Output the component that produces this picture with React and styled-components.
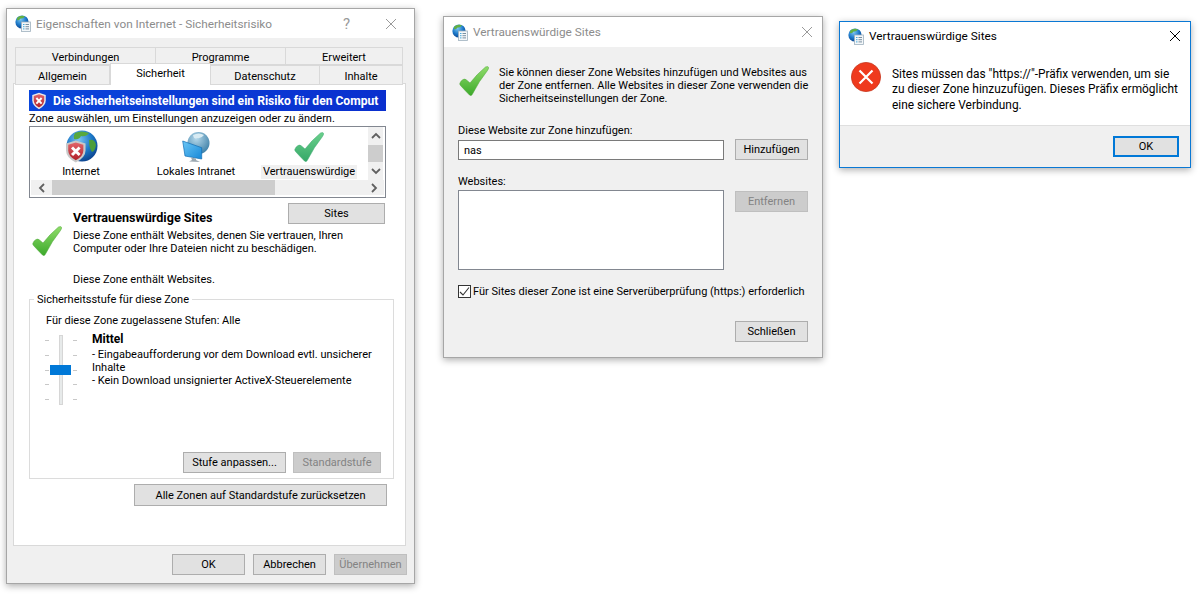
import React from "react";
import styled, { createGlobalStyle } from "styled-components";

const GlobalStyle = createGlobalStyle`
  html, body {
    margin: 0;
    background: #fff;
    font-family: "Roboto", "Liberation Sans", sans-serif;
    font-size: 11px;
    color: #000;
  }
`;

function Defs() {
  return (
    <svg width="0" height="0" style={{ position: "absolute" }}>
      <defs>
        <radialGradient id="globeFill" cx="40%" cy="30%" r="75%">
          <stop offset="0" stopColor="#7cc4f2" />
          <stop offset="0.55" stopColor="#1d79c8" />
          <stop offset="1" stopColor="#0b3f8a" />
        </radialGradient>
        <radialGradient id="paleGlobe" cx="40%" cy="30%" r="75%">
          <stop offset="0" stopColor="#b5d8ea" />
          <stop offset="1" stopColor="#3b7ea6" />
        </radialGradient>
        <linearGradient id="shieldFill" x1="0" y1="0" x2="0" y2="1">
          <stop offset="0" stopColor="#e2646a" />
          <stop offset="1" stopColor="#b01f28" />
        </linearGradient>
        <linearGradient id="limeCheck" x1="0" y1="0" x2="0" y2="1">
          <stop offset="0" stopColor="#8fdc6a" />
          <stop offset="1" stopColor="#3ca92b" />
        </linearGradient>
        <linearGradient id="tealCheck" x1="0" y1="0" x2="0" y2="1">
          <stop offset="0" stopColor="#6bd08c" />
          <stop offset="1" stopColor="#35a868" />
        </linearGradient>
        <linearGradient id="screenFill" x1="0" y1="0" x2="1" y2="1">
          <stop offset="0" stopColor="#6cc7f5" />
          <stop offset="1" stopColor="#1788d8" />
        </linearGradient>
      </defs>
    </svg>
  );
}

function CheckIcon({ teal }) {
  return (
    <svg width="30" height="30" viewBox="0 0 30 30">
      <path
        d="M0.8 17.5 Q1.5 15 4 13.5 Q6 12.5 7.5 14 L11 17 Q18 8 26.5 1 Q29 0 29.7 1.5 Q29.5 3 28.5 4.5 Q20 15 13.5 28 Q12.5 30.5 10.5 29 Q6 24.5 1.5 19.5 Q0.6 18.5 0.8 17.5 Z"
        fill={teal ? "url(#tealCheck)" : "url(#limeCheck)"}
        stroke={teal ? "#3aa96e" : "#4aa534"}
        strokeWidth="0.5"
      />
    </svg>
  );
}

function ShieldShape({ small }) {
  return (
    <>
      <path d="M10 1 L19 4 V11 Q19 18 10 23 Q1 18 1 11 V4 Z" fill={small ? "#e9e9e9" : "#c9c9c9"} />
      <path d="M10 3 L17 5.3 V11 Q17 16.8 10 20.8 Q3 16.8 3 11 V5.3 Z" fill="url(#shieldFill)" />
      <path d="M6.5 8 L13.5 15.5 M13.5 8 L6.5 15.5" stroke="#fff" strokeWidth="2.6" />
    </>
  );
}

function GlobeShieldIcon() {
  return (
    <svg width="34" height="34" viewBox="0 0 34 34">
      <circle cx="18" cy="16" r="15.5" fill="url(#globeFill)" />
      <path d="M11 3 Q17 0 25 3 Q22 7 17 6 Q15 10 10 9 Q9 6 11 3 Z" fill="#58a83e" />
      <path d="M25 10 Q31 9 32 15 Q31 21 28 22 Q25 18 25 10 Z" fill="#4d9e3a" />
      <g transform="translate(1 9.5) scale(1.08 1)">
        <ShieldShape />
      </g>
    </svg>
  );
}

function IntranetIcon() {
  return (
    <svg width="30" height="30" viewBox="0 0 30 30">
      <circle cx="17.5" cy="11" r="11" fill="url(#paleGlobe)" />
      <path d="M12 3 Q18 0 23 3 Q20 7 16 6 Q13 8 12 3 Z" fill="#d8ebf3" />
      <path d="M1.7 9 L20.7 15.7 V27 L4 24 Z" fill="url(#screenFill)" stroke="#0f6db5" strokeWidth="0.7" />
      <path d="M10 25.5 L15 26.5 L15 28 L19 30 L8 29.5 L11 28 Z" fill="#9aa7b0" />
    </svg>
  );
}

function WindowIcon() {
  return (
    <svg width="16" height="17" viewBox="0 0 16 17">
      <circle cx="7" cy="7" r="6.6" fill="url(#globeFill)" />
      <path d="M3 2 Q7 0 10 1.5 Q8 4 5.5 3.5 Q4 6 2 5 Q1.6 3 3 2 Z" fill="#62b043" />
      <rect x="6.5" y="7" width="9" height="9.5" fill="#f4f7f9" stroke="#9fb0bd" strokeWidth="0.8" />
      <path d="M10.5 9.5 H14 M10.5 11.7 H14 M10.5 13.9 H14" stroke="#6d8596" strokeWidth="0.9" />
      <path d="M8 9.5 H9.5 M8 11.7 H9.5 M8 13.9 H9.5" stroke="#2f9fd8" strokeWidth="0.9" />
    </svg>
  );
}

function CloseIcon({ color }) {
  return (
    <svg width="12" height="12" viewBox="0 0 12 12">
      <path d="M1 1 L11 11 M11 1 L1 11" stroke={color} strokeWidth="1" fill="none" />
    </svg>
  );
}

function ErrorIcon() {
  return (
    <svg width="30" height="30" viewBox="0 0 30 30">
      <circle cx="15" cy="15" r="14.6" fill="#ef3a1d" stroke="#c6381f" strokeWidth="0.8" />
      <path d="M8.5 8.5 L21.5 21.5 M21.5 8.5 L8.5 21.5" stroke="#fff" strokeWidth="2.2" />
    </svg>
  );
}

const chevrons = {
  up: "M1 6 L5 2 L9 6",
  down: "M1 2 L5 6 L9 2",
  left: "M6 1 L2 5 L6 9",
  right: "M2 1 L6 5 L2 9",
};

function Chevron({ dir }) {
  const wide = dir === "up" || dir === "down";
  return (
    <svg width={wide ? 10 : 8} height={wide ? 8 : 10} viewBox={wide ? "0 0 10 8" : "0 0 8 10"}>
      <path d={chevrons[dir]} stroke="#606060" strokeWidth="1.8" fill="none" />
    </svg>
  );
}

const ticks = [0, 1, 2, 3, 4];

function SecuritySlider() {
  return (
    <Slider>
      <TickColumn>
        {ticks.map((t) => (
          <Tick key={t} />
        ))}
      </TickColumn>
      <Track />
      <TickColumn>
        {ticks.map((t) => (
          <Tick key={t} />
        ))}
      </TickColumn>
      <Thumb />
    </Slider>
  );
}

function InternetOptions() {
  return (
    <Window $width={409} $height={576} $top={8} $left={6}>
      <TitleBar $height={29} $pad={8}>
        <WindowIcon />
        <TitleText $muted>Eigenschaften von Internet - Sicherheitsrisiko</TitleText>
        <HelpMark>?</HelpMark>
        <CloseSlot $gap={35} $right={17}>
          <CloseIcon color="#9a9a9a" />
        </CloseSlot>
      </TitleBar>
      <OptionsBody>
        <TabRow $columns="141px 130px 117px">
          <Tab>Verbindungen</Tab>
          <Tab>Programme</Tab>
          <Tab>Erweitert</Tab>
        </TabRow>
        <TabRow $columns="95px 101px 109px 83px">
          <Tab>Allgemein</Tab>
          <Tab $active>Sicherheit</Tab>
          <Tab>Datenschutz</Tab>
          <Tab>Inhalte</Tab>
        </TabRow>
        <TabPanel>
          <RiskBanner>
            <svg width="16" height="18" viewBox="0 0 20 24">
              <ShieldShape small />
            </svg>
            <span>Die Sicherheitseinstellungen sind ein Risiko für den Comput</span>
          </RiskBanner>
          <Hint>Zone auswählen, um Einstellungen anzuzeigen oder zu ändern.</Hint>
          <ZoneList>
            <ZoneTop>
              <Zones>
                <Zone $width={102}>
                  <ZoneIcon>
                    <GlobeShieldIcon />
                  </ZoneIcon>
                  <ZoneLabel>Internet</ZoneLabel>
                </Zone>
                <Zone $width={128}>
                  <ZoneIcon>
                    <IntranetIcon />
                  </ZoneIcon>
                  <ZoneLabel>Lokales Intranet</ZoneLabel>
                </Zone>
                <Zone $width={98}>
                  <ZoneIcon>
                    <CheckIcon teal />
                  </ZoneIcon>
                  <ZoneLabel $selected>Vertrauenswürdige</ZoneLabel>
                </Zone>
              </Zones>
              <VScroll>
                <ScrollEnd $height={18}>
                  <Chevron dir="up" />
                </ScrollEnd>
                <VThumb />
                <ScrollEnd $height={18}>
                  <Chevron dir="down" />
                </ScrollEnd>
              </VScroll>
            </ZoneTop>
            <HScroll>
              <HArrow>
                <Chevron dir="left" />
              </HArrow>
              <HThumb />
              <HArrow>
                <Chevron dir="right" />
              </HArrow>
            </HScroll>
          </ZoneList>
          <ZoneHead>
            <BoldText>Vertrauenswürdige Sites</BoldText>
            <Button $width={97} $height={21}>Sites</Button>
          </ZoneHead>
          <ZoneInfo>
            <InfoIcon>
              <CheckIcon />
            </InfoIcon>
            <InfoText>
              <p>
                Diese Zone enthält Websites, denen Sie vertrauen, Ihren
                <br />
                Computer oder Ihre Dateien nicht zu beschädigen.
              </p>
              <p>Diese Zone enthält Websites.</p>
            </InfoText>
          </ZoneInfo>
          <Group>
            <Legend>Sicherheitsstufe für diese Zone</Legend>
            <GroupLine>Für diese Zone zugelassene Stufen: Alle</GroupLine>
            <LevelRow>
              <SecuritySlider />
              <LevelText>
                <LevelName>Mittel</LevelName>
                <LevelLines>
                  - Eingabeaufforderung vor dem Download evtl. unsicherer
                  <br />
                  Inhalte
                  <br />
                  - Kein Download unsignierter ActiveX-Steuerelemente
                </LevelLines>
              </LevelText>
            </LevelRow>
            <GroupButtons>
              <Button $width={103} $height={21}>Stufe anpassen...</Button>
              <Button $width={88} $height={21} $disabled>Standardstufe</Button>
            </GroupButtons>
          </Group>
          <ResetButton $width={253} $height={22}>Alle Zonen auf Standardstufe zurücksetzen</ResetButton>
        </TabPanel>
        <DialogButtons>
          <Button $width={73} $height={21}>OK</Button>
          <Button $width={73} $height={21}>Abbrechen</Button>
          <Button $width={73} $height={21} $disabled>Übernehmen</Button>
        </DialogButtons>
      </OptionsBody>
    </Window>
  );
}

function TrustedSites() {
  return (
    <Window $width={380} $height={342} $top={16} $left={28}>
      <TitleBar $height={30} $pad={8}>
        <WindowIcon />
        <TitleText $muted>Vertrauenswürdige Sites</TitleText>
        <CloseSlot $right={9}>
          <CloseIcon color="#9a9a9a" />
        </CloseSlot>
      </TitleBar>
      <SitesBody>
        <SitesIntro>
          <IntroIcon>
            <CheckIcon />
          </IntroIcon>
          <p>
            Sie können dieser Zone Websites hinzufügen und Websites aus
            <br />
            der Zone entfernen. Alle Websites in dieser Zone verwenden die
            <br />
            Sicherheitseinstellungen der Zone.
          </p>
        </SitesIntro>
        <FieldLabel>Diese Website zur Zone hinzufügen:</FieldLabel>
        <FieldRow $top={1}>
          <SiteInput readOnly value="nas" />
          <Button $width={73} $height={21}>Hinzufügen</Button>
        </FieldRow>
        <FieldLabel $top={14}>Websites:</FieldLabel>
        <FieldRow $top={2}>
          <SiteList />
          <Button $width={73} $height={21} $disabled>Entfernen</Button>
        </FieldRow>
        <CheckRow>
          <CheckBox>
            <svg width="11" height="11" viewBox="0 0 11 11">
              <path d="M1 6 L4 9 L10 1.5" stroke="#333" strokeWidth="1.1" fill="none" />
            </svg>
          </CheckBox>
          <span>Für Sites dieser Zone ist eine Serverüberprüfung (https:) erforderlich</span>
        </CheckRow>
        <SitesFooter>
          <Button $width={73} $height={21}>Schließen</Button>
        </SitesFooter>
      </SitesBody>
    </Window>
  );
}

function ErrorDialog() {
  return (
    <Window $width={352} $height={147} $top={21} $left={16} $active>
      <TitleBar $height={28} $pad={8}>
        <WindowIcon />
        <TitleText>Vertrauenswürdige Sites</TitleText>
        <CloseSlot $right={9}>
          <CloseIcon color="#000" />
        </CloseSlot>
      </TitleBar>
      <MessageArea>
        <ErrorIcon />
        <p>
          Sites müssen das "https://"-Präfix verwenden, um sie
          <br />
          zu dieser Zone hinzuzufügen. Dieses Präfix ermöglicht
          <br />
          eine sichere Verbindung.
        </p>
      </MessageArea>
      <MessageFooter>
        <Button $width={66} $height={21} $focused>OK</Button>
      </MessageFooter>
    </Window>
  );
}

export default function App() {
  return (
    <Desktop>
      <GlobalStyle />
      <Defs />
      <InternetOptions />
      <TrustedSites />
      <ErrorDialog />
    </Desktop>
  );
}

// styled components

const Desktop = styled.div`
  display: flex;
  align-items: flex-start;
  width: 1201px;
  height: 597px;
  overflow: hidden;
  background: #fff;
`;

const Window = styled.section`
  display: flex;
  flex-direction: column;
  flex: none;
  box-sizing: border-box;
  width: ${(p) => p.$width}px;
  height: ${(p) => p.$height}px;
  margin-top: ${(p) => p.$top}px;
  margin-left: ${(p) => p.$left}px;
  background: #f0f0f0;
  border: 1px solid ${(p) => (p.$active ? "#0a78d4" : "#a6a6a6")};
  box-shadow: 0 2px 7px rgba(0, 0, 0, 0.32);
`;

const TitleBar = styled.header`
  display: flex;
  align-items: center;
  flex: none;
  height: ${(p) => p.$height}px;
  padding-left: ${(p) => p.$pad}px;
  background: #fff;
`;

const TitleText = styled.span`
  margin-left: 5px;
  font-size: 11.8px;
  white-space: nowrap;
  color: ${(p) => (p.$muted ? "#8c8c8c" : "#000")};
`;

const HelpMark = styled.span`
  margin-left: auto;
  font-size: 15px;
  color: #9a9a9a;
`;

const CloseSlot = styled.span`
  display: flex;
  margin-left: ${(p) => (p.$gap ? `${p.$gap}px` : "auto")};
  margin-right: ${(p) => p.$right}px;
`;

const OptionsBody = styled.div`
  display: flex;
  flex-direction: column;
  flex: 1;
  padding: 9px 7px 0 6px;
`;

const TabRow = styled.div`
  display: grid;
  grid-template-columns: ${(p) => p.$columns};
  height: 18px;
  margin-left: 2px;
  & + & {
    height: 19px;
  }
`;

const Tab = styled.div`
  position: relative;
  display: flex;
  align-items: center;
  justify-content: center;
  box-sizing: border-box;
  padding-top: 2px;
  background: ${(p) => (p.$active ? "#fff" : "#f0f0f0")};
  border: 1px solid #d9d9d9;
  border-left-width: ${(p) => (p.$active ? 1 : 0)}px;
  border-bottom-width: ${(p) => (p.$active ? 0 : 1)}px;
  ${(p) => p.$active && "margin-top: -2px; padding-top: 0; padding-bottom: 2px; height: 22px; z-index: 1;"}
  &:first-child {
    border-left-width: 1px;
  }
`;

const TabPanel = styled.div`
  display: flex;
  flex-direction: column;
  align-items: flex-start;
  box-sizing: border-box;
  width: 393px;
  height: 463px;
  margin-top: -1px;
  padding: 6px 0 0 15px;
  background: #fff;
  border: 1px solid #d9d9d9;
`;

const RiskBanner = styled.div`
  display: flex;
  align-items: center;
  gap: 6px;
  flex: none;
  box-sizing: border-box;
  width: 357px;
  height: 21px;
  padding-left: 2px;
  overflow: hidden;
  white-space: nowrap;
  font-size: 12.1px;
  font-weight: 700;
  color: #fff;
  background: linear-gradient(90deg, #0a46dc, #0a38d4 60%, #0a2fce);
  svg {
    flex: none;
  }
`;

const Hint = styled.div`
  height: 15px;
  line-height: 15px;
  white-space: nowrap;
`;

const ZoneList = styled.div`
  display: flex;
  flex-direction: column;
  flex: none;
  box-sizing: border-box;
  width: 357px;
  height: 72px;
  border: 1px solid #828790;
`;

const ZoneTop = styled.div`
  display: flex;
  height: 53px;
`;

const Zones = styled.div`
  display: flex;
  width: 338px;
  padding-top: 2px;
`;

const Zone = styled.div`
  display: flex;
  flex-direction: column;
  align-items: center;
  width: ${(p) => p.$width}px;
`;

const ZoneIcon = styled.div`
  display: flex;
  align-items: center;
  height: 36px;
`;

const ZoneLabel = styled.div`
  height: 14px;
  line-height: 14px;
  padding: 0 2px;
  white-space: nowrap;
  background: ${(p) => (p.$selected ? "#f0f0f0" : "transparent")};
`;

const VScroll = styled.div`
  display: flex;
  flex-direction: column;
  width: 15px;
  background: #f0f0f0;
`;

const ScrollEnd = styled.div`
  display: flex;
  align-items: center;
  justify-content: center;
  height: ${(p) => p.$height}px;
`;

const VThumb = styled.div`
  height: 17px;
  background: #cdcdcd;
`;

const HScroll = styled.div`
  display: flex;
  height: 15px;
  width: 353px;
  margin-left: 1px;
  background: #f0f0f0;
`;

const HArrow = styled.div`
  display: flex;
  align-items: center;
  justify-content: center;
  width: 21px;
`;

const HThumb = styled.div`
  width: 223px;
  background: #cdcdcd;
  margin-right: auto;
`;

const ZoneHead = styled.div`
  display: flex;
  align-items: flex-end;
  justify-content: space-between;
  box-sizing: border-box;
  width: 356px;
  height: 21px;
  margin-top: 5px;
  padding-left: 44px;
`;

const BoldText = styled.div`
  font-size: 12.6px;
  font-weight: 700;
  line-height: 15px;
  margin-bottom: -1px;
`;

const ZoneInfo = styled.div`
  display: flex;
  margin-top: 5px;
  height: 70px;
  line-height: 13px;
`;

const InfoIcon = styled.div`
  width: 41px;
  padding-left: 3px;
  margin-top: -3px;
`;

const InfoText = styled.div`
  p {
    margin: 0 0 18px;
    white-space: nowrap;
  }
`;

const Group = styled.div`
  position: relative;
  display: flex;
  flex-direction: column;
  flex: none;
  box-sizing: border-box;
  width: 365px;
  height: 180px;
  padding: 14px 12px 5px 16px;
  border: 1px solid #dcdcdc;
`;

const Legend = styled.span`
  position: absolute;
  top: -7px;
  left: 4px;
  padding: 0 3px;
  line-height: 14px;
  background: #fff;
`;

const GroupLine = styled.div`
  height: 14px;
  line-height: 14px;
`;

const LevelRow = styled.div`
  display: flex;
  margin-top: 7px;
`;

const Slider = styled.div`
  position: relative;
  display: flex;
  height: 70px;
  margin-left: -1px;
`;

const TickColumn = styled.div`
  display: flex;
  flex-direction: column;
  justify-content: space-between;
  height: 60px;
  padding: 5px 0;
`;

const Tick = styled.i`
  display: block;
  width: 4px;
  height: 1px;
  background: #c8c8c8;
`;

const Track = styled.div`
  box-sizing: border-box;
  width: 4px;
  height: 70px;
  margin: 0 10px;
  background: #e7eaea;
  border: 1px solid #d6d6d6;
`;

const Thumb = styled.div`
  position: absolute;
  top: 30px;
  left: 5px;
  width: 21px;
  height: 10px;
  background: #0078d7;
`;

const LevelText = styled.div`
  margin-left: 15px;
  margin-top: -2px;
`;

const LevelName = styled.div`
  font-size: 12px;
  font-weight: 700;
  height: 15px;
  line-height: 13px;
`;

const LevelLines = styled.div`
  line-height: 13px;
  white-space: nowrap;
`;

const GroupButtons = styled.div`
  display: flex;
  justify-content: flex-end;
  gap: 7px;
  margin-top: auto;
`;

const Button = styled.div`
  display: flex;
  align-items: center;
  justify-content: center;
  flex: none;
  box-sizing: border-box;
  width: ${(p) => p.$width}px;
  height: ${(p) => p.$height}px;
  white-space: nowrap;
  color: ${(p) => (p.$disabled ? "#838383" : "#000")};
  background: ${(p) => (p.$disabled ? "#cccccc" : "#e1e1e1")};
  border: ${(p) => (p.$focused ? "2px solid #0078d7" : `1px solid ${p.$disabled ? "#bfbfbf" : "#adadad"}`)};
`;

const ResetButton = styled(Button)`
  margin: 5px 0 0 105px;
`;

const DialogButtons = styled.div`
  display: flex;
  justify-content: flex-end;
  gap: 8px;
  margin-top: 8px;
`;

const SitesBody = styled.div`
  display: flex;
  flex-direction: column;
  flex: 1;
  padding: 0 14px 0 14px;
`;

const SitesIntro = styled.div`
  display: flex;
  height: 57px;
  padding-top: 19px;
  box-sizing: content-box;
  line-height: 13px;
  p {
    margin: 0 0 0 10px;
    white-space: nowrap;
    padding-top: 0;
  }
`;

const IntroIcon = styled.div`
  width: 30px;
  flex: none;
  margin-left: 1px;
`;

const FieldLabel = styled.div`
  height: 15px;
  line-height: 15px;
  margin-top: ${(p) => p.$top || 0}px;
`;

const FieldRow = styled.div`
  display: flex;
  justify-content: space-between;
  align-items: flex-start;
  margin-top: ${(p) => p.$top}px;
  width: 350px;
`;

const SiteInput = styled.input`
  box-sizing: border-box;
  width: 266px;
  height: 20px;
  margin: 1px 0 0;
  padding: 0 5px;
  font: inherit;
  color: #000;
  background: #fff;
  border: 1px solid #7a7a7a;
  outline: none;
`;

const SiteList = styled.div`
  box-sizing: border-box;
  width: 266px;
  height: 80px;
  margin-top: -1px;
  background: #fff;
  border: 1px solid #828790;
`;

const CheckRow = styled.div`
  display: flex;
  align-items: center;
  gap: 2px;
  height: 13px;
  margin-top: 15px;
  white-space: nowrap;
`;

const CheckBox = styled.span`
  display: flex;
  align-items: center;
  justify-content: center;
  box-sizing: border-box;
  width: 13px;
  height: 13px;
  background: #fff;
  border: 1px solid #333;
`;

const SitesFooter = styled.div`
  display: flex;
  justify-content: flex-end;
  width: 350px;
  margin-top: 23px;
`;

const MessageArea = styled.div`
  display: flex;
  flex: none;
  box-sizing: border-box;
  height: 76px;
  padding: 12px 0 0 11px;
  font-size: 11.9px;
  line-height: 15.4px;
  background: #fff;
  border-bottom: 1px solid #dfdfdf;
  p {
    margin: 5px 0 0 11px;
    white-space: nowrap;
  }
`;

const MessageFooter = styled.div`
  display: flex;
  justify-content: flex-end;
  padding: 10px 11px 0 0;
`;
